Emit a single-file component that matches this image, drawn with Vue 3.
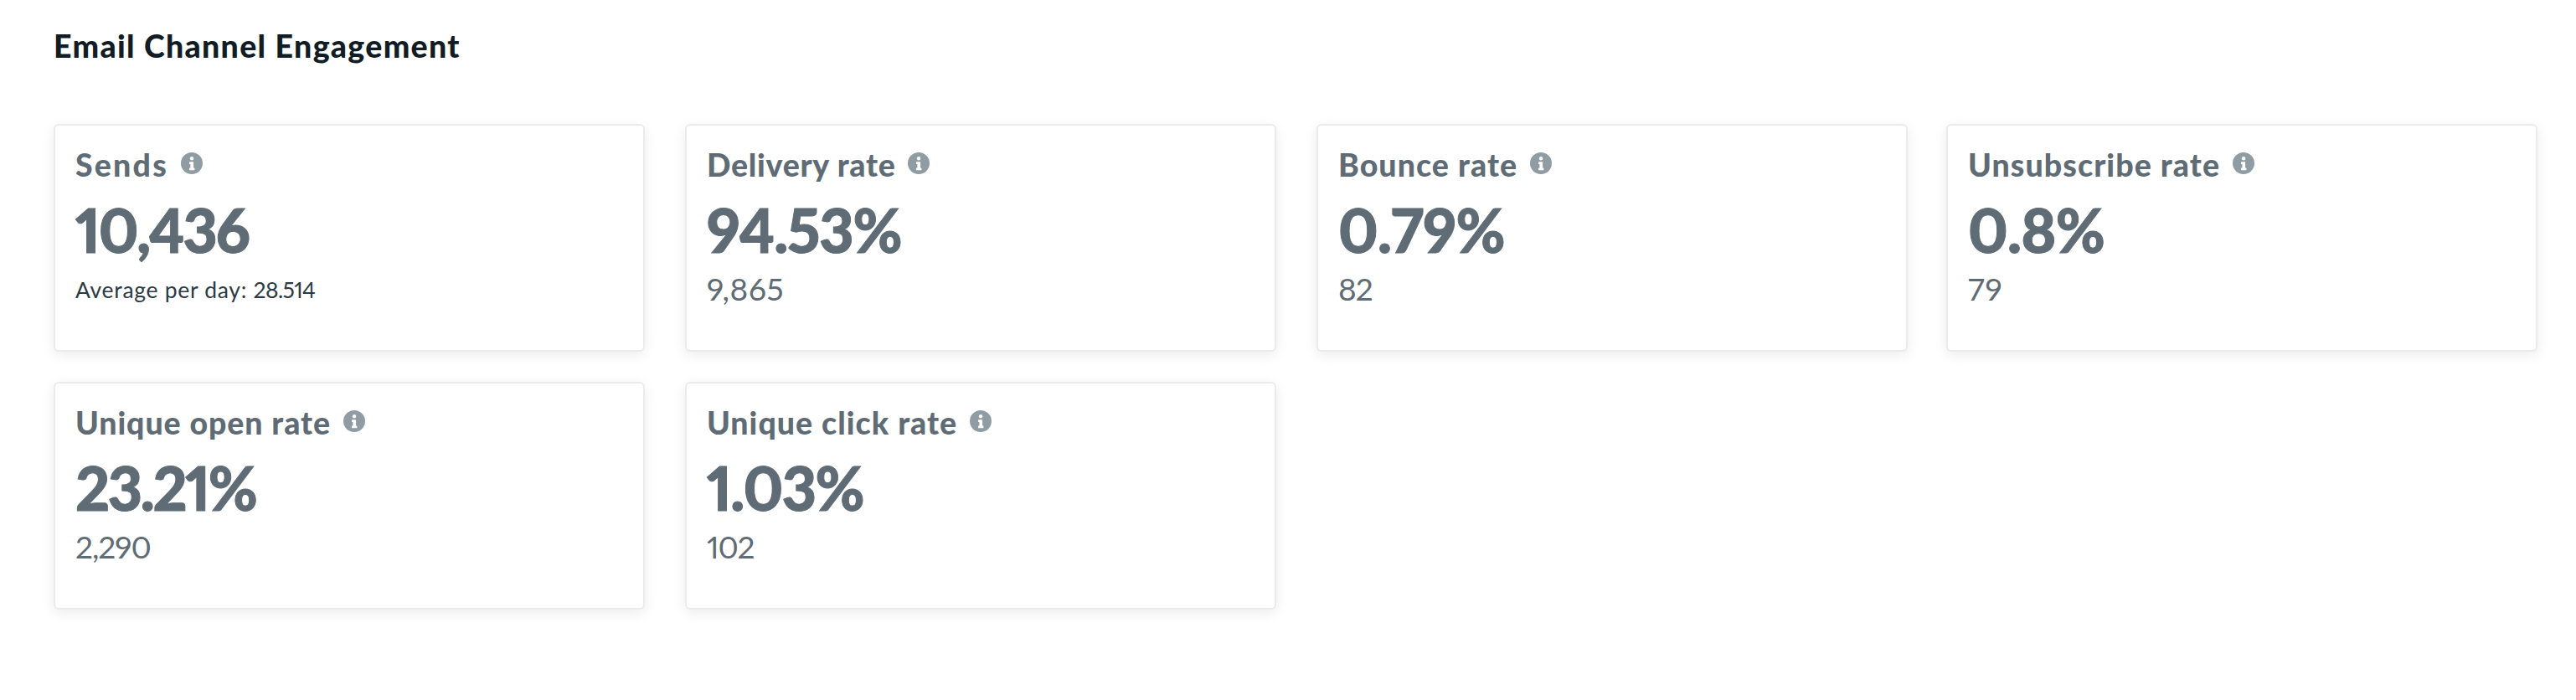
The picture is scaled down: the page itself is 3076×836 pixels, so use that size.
<script setup>
const metrics = [
  { key: 'sends', label: 'Sends', value: '10,436', average: '28.514' },
  { key: 'delivery', label: 'Delivery rate', value: '94.53%', note: '9,865' },
  { key: 'bounce', label: 'Bounce rate', value: '0.79%', note: '82' },
  { key: 'unsubscribe', label: 'Unsubscribe rate', value: '0.8%', note: '79' },
  { key: 'open', label: 'Unique open rate', value: '23.21%', note: '2,290' },
  { key: 'click', label: 'Unique click rate', value: '1.03%', note: '102' },
]
</script>

<template>
  <main class="engagement">
    <h1 class="title">Email Channel Engagement</h1>
    <section class="grid">
      <article v-for="m in metrics" :key="m.key" class="card" :class="m.key">
        <header class="head">
          <h2 class="label">{{ m.label }}</h2>
          <svg class="info" viewBox="0 0 26 26" aria-hidden="true">
            <circle cx="13" cy="13" r="13" fill="#8f9ca4" />
            <circle cx="13.1" cy="7.2" r="2.2" fill="#fff" />
            <path
              d="M10.5 11.2h4.1q.5 0 .5.5v6.8h.8q.5 0 .5.5v1.8q0 .5-.5.5h-5.4q-.5 0-.5-.5v-1.8q0-.5.5-.5h.9v-4.5h-.9q-.5 0-.5-.5v-1.8q0-.5.5-.5z"
              fill="#fff"
            />
          </svg>
        </header>
        <p class="value">{{ m.value }}</p>
        <p v-if="m.average" class="note average">Average per day: <span class="number">{{ m.average }}</span></p>
        <p v-else class="note">{{ m.note }}</p>
      </article>
    </section>
  </main>
</template>

<style>
body {
  background: #fff;
}
</style>

<style scoped>
.engagement {
  box-sizing: border-box;
  min-height: 836px;
  padding: 31px 46px 0 64px;
  font-family: Lato, 'Liberation Sans', sans-serif;
  font-feature-settings: 'pnum';
  color: #5f6c75;
}
.title {
  margin: 0 0 70px;
  font-size: 37.5px;
  line-height: 47px;
  font-weight: 900;
  letter-spacing: 1.3px;
  color: #111c24;
}
.grid {
  display: grid;
  grid-template-columns: 754px 754px 752px 706px;
  grid-auto-rows: 272px;
  row-gap: 36px;
}
.card {
  box-sizing: border-box;
  width: 706px;
  padding: 22px 24px;
  border: 2px solid #ebebeb;
  border-radius: 6px;
  background: #fff;
  box-shadow: 0 4px 16px rgba(0, 0, 0, 0.08);
}
.head {
  display: flex;
  align-items: flex-start;
}
.label {
  margin: 1px 0 0;
  font-size: 37.5px;
  line-height: 47px;
  font-weight: 900;
  white-space: nowrap;
}
.info {
  flex: none;
  width: 26px;
  height: 26px;
  margin: 10px 0 0 14.6px;
}
.value {
  margin: 12px 0 0;
  font-size: 71.5px;
  line-height: 84px;
  font-weight: 900;
  -webkit-text-stroke: 1px currentColor;
}
.note {
  margin: 5px 0 0;
  font-size: 37px;
  line-height: 48px;
}
.note.average {
  margin-top: 6px;
  font-size: 26.5px;
  letter-spacing: 0.7px;
  color: #2c3a45;
}
.number {
  letter-spacing: -0.6px;
}

.sends .label { letter-spacing: 2.2px; }
.delivery .label { letter-spacing: 0.72px; }
.bounce .label { letter-spacing: 1.05px; }
.unsubscribe .label { letter-spacing: 1.08px; }
.open .label { letter-spacing: 0.92px; }
.click .label { letter-spacing: 1.02px; }

.sends .value { letter-spacing: -2.2px; }
.delivery .value { letter-spacing: -1.2px; }
.bounce .value { letter-spacing: -0.6px; }
.unsubscribe .value { letter-spacing: -0.7px; }
.open .value { letter-spacing: -2.4px; }
.click .value { letter-spacing: -1.6px; }

.delivery .note { letter-spacing: 0.6px; }
.bounce .note { letter-spacing: -1px; }
.unsubscribe .note { letter-spacing: 1px; }
.open .note { letter-spacing: -1px; }
.click .note { letter-spacing: -1.2px; }
</style>
